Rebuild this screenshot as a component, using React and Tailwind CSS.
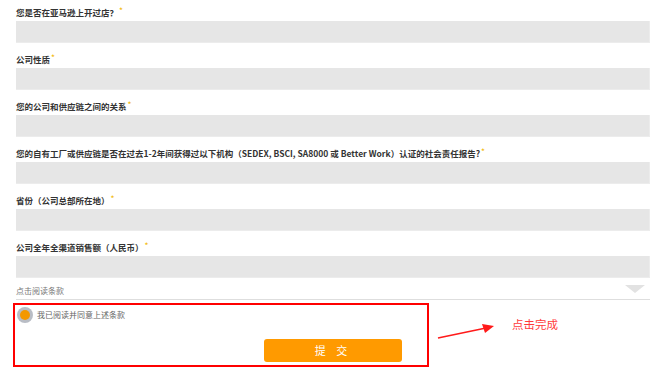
import React from 'react';

const fields = [
  '您是否在亚马逊上开过店？',
  '公司性质',
  '您的公司和供应链之间的关系',
  '您的自有工厂或供应链是否在过去1-2年间获得过以下机构（SEDEX, BSCI, SA8000 或 Better Work）认证的社会责任报告?',
  '省份（公司总部所在地）',
  '公司全年全渠道销售额（人民币）',
];

const font = { fontFamily: '"Noto Sans CJK SC", "Liberation Sans", sans-serif' };

export default function App() {
  return (
    <div className="w-[657px] h-[372px] bg-white overflow-hidden" style={font}>
      <div className="pl-[16px] w-[650px] pt-[4px]">
        {fields.map((label, i) => (
          <div key={i} className="mb-[8px]">
            <div className="h-[16px] leading-[16px] text-[8.5px] font-bold text-[#333] whitespace-nowrap">
              {label}
              <span className="text-[#f2b705] font-normal ml-[1px] relative -top-[2px]">*</span>
            </div>
            <div className="mt-[1px] h-[22px] bg-[#e6e6e6] border-b border-r border-[#ececec]" />
          </div>
        ))}

        {/* terms link */}
        <div className="-mt-[2px] h-[16px] flex items-center justify-between border-b border-[#dedede] pb-[1px]">
          <span className="text-[8px] text-[#777]">点击阅读条款</span>
          <svg width="20" height="8" viewBox="0 0 20 8" className="mr-[5px] -mt-[4px]">
            <polygon points="0,0 20,0 10,8" fill="#e2e2e2" />
          </svg>
        </div>

        {/* agreement + submit */}
        <div className="flex items-start mt-[3px] -ml-[3px]">
          <div className="w-[416px] h-[64px] border-2 border-[#ff0000] flex flex-col">
            <div className="flex items-center pl-[2px] pt-[2px] gap-[4px]">
              <div className="w-[16px] h-[16px] rounded-full bg-[#b9bdc5] flex items-center justify-center">
                <div className="w-[10px] h-[10px] rounded-full bg-[#f39800]" />
              </div>
              <span className="text-[8px] text-[#666]">我已阅读并同意上述条款</span>
            </div>
            <button className="mt-auto mb-[3px] ml-[249px] w-[138px] h-[23px] rounded-[3px] bg-[#ff9a00] text-white text-[11px] tracking-[4px]">
              提 交
            </button>
          </div>
          <svg width="62" height="22" viewBox="0 0 62 22" className="ml-[7px] mt-[18px]">
            <line x1="2" y1="17" x2="50" y2="7" stroke="#ff1a1a" strokeWidth="1.6" />
            <polygon points="58,5 46,3 49,12" fill="#ff1a1a" />
          </svg>
          <span className="ml-[14px] mt-[13px] text-[11.5px] text-[#ff3b3b] leading-[16px]">点击完成</span>
        </div>
      </div>
    </div>
  );
}
